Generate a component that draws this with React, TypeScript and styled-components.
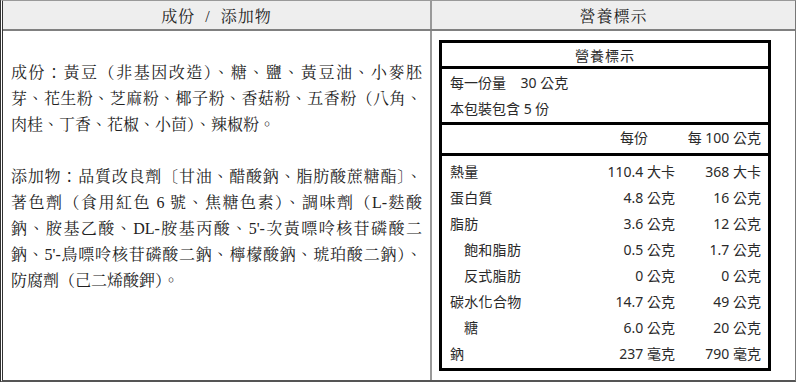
import styled, { createGlobalStyle } from "styled-components";

const GlobalStyle = createGlobalStyle`
  body {
    margin: 0;
    background: #ffffff;
  }
`;

const serif = `"Liberation Serif", "Noto Serif CJK TC", "Noto Sans CJK TC", serif`;
const sans = `"Noto Sans", "Noto Sans CJK TC", sans-serif`;

const Frame = styled.div`
  width: 796px;
  height: 382px;
  box-sizing: border-box;
  border-left: 3px double #333;
  border-right: 1px solid #777;
  border-top: 1px solid #999;
  border-bottom: 2px solid #555;
  display: flex;
  flex-direction: column;
`;

const HeaderRow = styled.div`
  display: grid;
  grid-template-columns: 429px 1fr;
  height: 28px;
  background: #eeeeee;
  border-bottom: 2px solid #808080;
`;

const HeadCell = styled.div<{ $divider?: boolean }>`
  display: flex;
  align-items: center;
  justify-content: center;
  font-family: ${serif};
  font-size: 16px;
  letter-spacing: 1px;
  color: #222;
  white-space: pre;
  border-right: ${(p) => (p.$divider ? "2px solid #999" : "none")};
`;

const BodyRow = styled.div`
  display: grid;
  grid-template-columns: 429px 1fr;
  flex: 1;
  min-height: 0;
`;

const IngredientCell = styled.div`
  border-right: 2px solid #999;
  padding: 29px 8px 0 8px;
  font-family: ${serif};
  font-size: 16px;
  line-height: 26px;
  color: #222;
`;

const Paragraph = styled.div`
  margin-bottom: 26px;
`;

const Line = styled.div<{ $last?: boolean }>`
  text-align: justify;
  text-align-last: ${(p) => (p.$last ? "left" : "justify")};
  white-space: nowrap;
`;

const NutritionCell = styled.div`
  padding: 9px 0 0 7px;
`;

const LabelBox = styled.div`
  width: 332px;
  height: 331px;
  box-sizing: border-box;
  border: 3px solid #000;
  font-family: ${sans};
  font-size: 14px;
  color: #2a2a2a;
  display: flex;
  flex-direction: column;
`;

const Title = styled.div`
  height: 23px;
  display: flex;
  align-items: center;
  justify-content: center;
  border-bottom: 3px solid #000;
  letter-spacing: 1px;
`;

const Serving = styled.div`
  padding: 1px 8px 0 8px;
  line-height: 26px;
  border-bottom: 3px solid #000;
`;

const ColHead = styled.div`
  display: grid;
  grid-template-columns: 1fr 110px 86px;
  height: 28px;
  line-height: 26px;
  padding-right: 7px;
  border-bottom: 3px solid #000;
`;

const Rows = styled.div`
  padding: 3px 7px 1px 0;
`;

const Row = styled.div`
  display: grid;
  grid-template-columns: 1fr 110px 86px;
  height: 26px;
  line-height: 26px;
`;

const Name = styled.div<{ $indent?: boolean }>`
  padding-left: ${(p) => (p.$indent ? "22px" : "8px")};
  letter-spacing: 0.3px;
`;

const Value = styled.div<{ $pad?: number }>`
  text-align: right;
  white-space: nowrap;
  padding-right: ${(p) => p.$pad ?? 0}px;
`;

const rows = [
  { name: "熱量", a: "110.4 大卡", b: "368 大卡" },
  { name: "蛋白質", a: "4.8 公克", b: "16 公克" },
  { name: "脂肪", a: "3.6 公克", b: "12 公克" },
  { name: "飽和脂肪", a: "0.5 公克", b: "1.7 公克", indent: true },
  { name: "反式脂肪", a: "0 公克", b: "0 公克", indent: true },
  { name: "碳水化合物", a: "14.7 公克", b: "49 公克" },
  { name: "糖", a: "6.0 公克", b: "20 公克", indent: true },
  { name: "鈉", a: "237 毫克", b: "790 毫克" },
];

export default function App() {
  return (
    <>
      <GlobalStyle />
      <Frame>
        <HeaderRow>
          <HeadCell $divider>{"成份  /  添加物"}</HeadCell>
          <HeadCell>營養標示</HeadCell>
        </HeaderRow>
        <BodyRow>
          <IngredientCell>
            <Paragraph>
              <Line>成份：黃豆（非基因改造）、糖、鹽、黃豆油、小麥胚</Line>
              <Line>芽、花生粉、芝麻粉、椰子粉、香菇粉、五香粉（八角、</Line>
              <Line $last>肉桂、丁香、花椒、小茴）、辣椒粉。</Line>
            </Paragraph>
            <Paragraph>
              <Line>添加物：品質改良劑〔甘油、醋酸鈉、脂肪酸蔗糖酯〕、</Line>
              <Line>著色劑（食用紅色 6 號、焦糖色素）、調味劑（L-麩酸</Line>
              <Line>鈉、胺基乙酸、DL-胺基丙酸、5'-次黃嘌呤核苷磷酸二</Line>
              <Line>鈉、5'-鳥嘌呤核苷磷酸二鈉、檸檬酸鈉、琥珀酸二鈉）、</Line>
              <Line $last>防腐劑（己二烯酸鉀）。</Line>
            </Paragraph>
          </IngredientCell>
          <NutritionCell>
            <LabelBox>
              <Title>營養標示</Title>
              <Serving>
                <div>每一份量&nbsp;&nbsp;&nbsp;&nbsp;30 公克</div>
                <div>本包裝包含 5 份</div>
              </Serving>
              <ColHead>
                <div />
                <Value $pad={27}>每份</Value>
                <Value>每 100 公克</Value>
              </ColHead>
              <Rows>
                {rows.map((r) => (
                  <Row key={r.name}>
                    <Name $indent={r.indent}>{r.name}</Name>
                    <Value>{r.a}</Value>
                    <Value>{r.b}</Value>
                  </Row>
                ))}
              </Rows>
            </LabelBox>
          </NutritionCell>
        </BodyRow>
      </Frame>
    </>
  );
}
